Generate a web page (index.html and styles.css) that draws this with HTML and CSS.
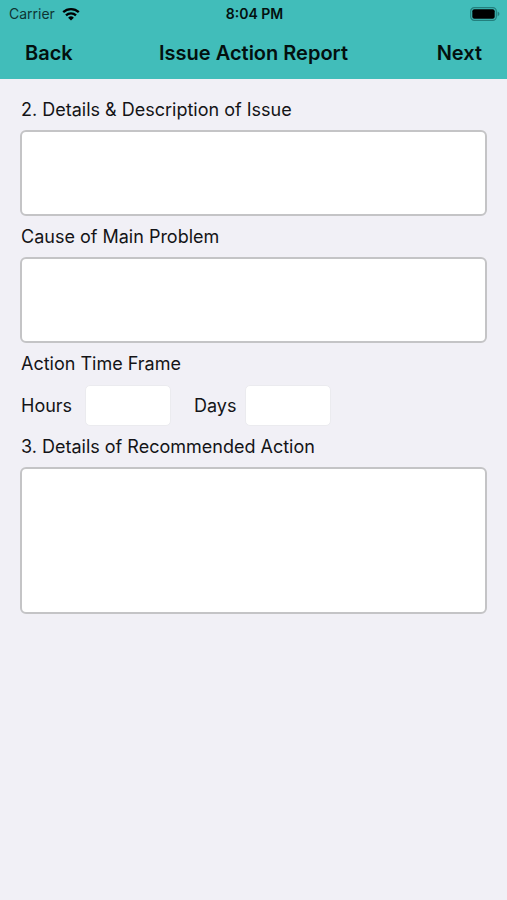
FILE: index.html
```html
<!DOCTYPE html>
<html lang="en">
<head>
<meta charset="utf-8">
<meta name="viewport" content="width=device-width, initial-scale=1">
<title>Issue Action Report</title>
<link rel="stylesheet" href="styles.css">
</head>
<body>
<header class="header">
  <div class="status">
    <div class="carrier">
      <span>Carrier</span>
      <svg class="wifi" viewBox="0 0 18 14" aria-hidden="true">
        <path d="M1.2 5.2a11.2 11.2 0 0 1 15.6 0M4 8.3a7.2 7.2 0 0 1 10 0" fill="none" stroke="currentColor" stroke-width="2.3"/>
        <path d="M9 13.6 6.1 10.7a4.2 4.2 0 0 1 5.8 0z" fill="currentColor"/>
      </svg>
    </div>
    <span class="time">8:04 PM</span>
    <svg class="battery" viewBox="0 0 30 14" aria-hidden="true">
      <rect x=".7" y=".7" width="25.6" height="12.6" rx="3.6" fill="none" stroke="#237f7d" stroke-width="1.2"/>
      <rect x="2.3" y="2.3" width="22.4" height="9.4" rx="2" fill="#000"/>
      <path d="M27.6 4.6c2.4 1 2.4 3.8 0 4.8z" fill="#237f7d"/>
    </svg>
  </div>
  <nav class="nav">
    <button type="button" class="nav-button">Back</button>
    <h1 class="title">Issue Action Report</h1>
    <button type="button" class="nav-button nav-next">Next</button>
  </nav>
</header>
<main class="form">
  <label class="label" for="details">2. Details &amp; Description of Issue</label>
  <textarea class="area" id="details"></textarea>
  <label class="label" for="cause">Cause of Main Problem</label>
  <textarea class="area" id="cause"></textarea>
  <fieldset class="frame">
    <legend class="label">Action Time Frame</legend>
    <div class="frame-row">
      <label class="hours" for="hours">Hours</label>
      <input class="number" id="hours" type="text" inputmode="numeric">
      <label class="days" for="days">Days</label>
      <input class="number" id="days" type="text" inputmode="numeric">
    </div>
  </fieldset>
  <label class="label" for="action">3. Details of Recommended Action</label>
  <textarea class="area area-tall" id="action"></textarea>
</main>
</body>
</html>
```
FILE: styles.css
```css
* {
  box-sizing: border-box;
}

body {
  margin: 0;
  min-height: 100vh;
  background: #f1f0f6;
  color: #141417;
  font-family: Inter, "Liberation Sans", sans-serif;
  font-size: 18px;
}

.header {
  background: #41bdba;
  color: #03100f;
}

.status {
  display: grid;
  grid-template-columns: 1fr auto 1fr;
  align-items: center;
  height: 27px;
  padding: 0 7px 0 9px;
  font-size: 14px;
}

.carrier {
  display: flex;
  align-items: center;
  gap: 7px;
  color: #0e3533;
}

.wifi {
  width: 18px;
  height: 14px;
  color: #000;
}

.time {
  font-weight: 600;
}

.battery {
  justify-self: end;
  width: 30px;
  height: 14px;
}

.nav {
  display: grid;
  grid-template-columns: 1fr auto 1fr;
  align-items: center;
  height: 52px;
  padding: 0 25px;
}

.title,
.nav-button {
  margin: 0;
  padding: 0;
  border: 0;
  background: none;
  color: inherit;
  font: 600 20px/28px Inter, "Liberation Sans", sans-serif;
}

.nav-button {
  justify-self: start;
}

.nav-next {
  justify-self: end;
}

.form {
  padding: 10px 20px 20px;
}

.label {
  display: block;
  padding: 0 1px;
  line-height: 41px;
}

.area {
  display: block;
  width: 100%;
  height: 86px;
  padding: 8px;
  border: 2px solid #c4c4c6;
  border-radius: 6px;
  background: #fff;
  font: inherit;
  resize: none;
}

.area-tall {
  height: 147px;
}

.frame {
  margin: 0;
  padding: 0;
  border: 0;
}

.frame-row {
  display: flex;
  align-items: center;
  padding: 1px 1px 0;
}

.hours {
  width: 64px;
}

.days {
  width: 51px;
  margin-left: 23px;
}

.number {
  width: 86px;
  height: 41px;
  padding: 0 8px;
  border: 1px solid #ebebef;
  border-radius: 5px;
  background: #fff;
  font: inherit;
}
```
